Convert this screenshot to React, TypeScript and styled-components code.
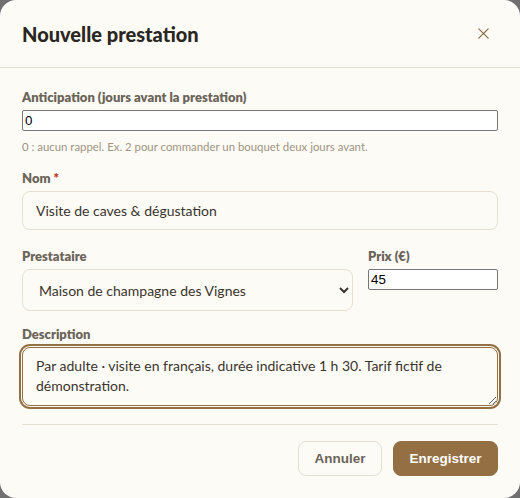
import React from "react";
import styled, { createGlobalStyle } from "styled-components";

const Global = createGlobalStyle`
  html, body { margin: 0; padding: 0; background: #707070; }
  body { width: 520px; height: 498px; overflow: hidden; }
  * { box-sizing: border-box; }
`;

const Modal = styled.div`
  width: 520px;
  height: 498px;
  background: #fdfbf6;
  border-radius: 16px;
  display: flex;
  flex-direction: column;
  overflow: hidden;
`;

const Header = styled.div`
  height: 68px;
  padding: 0 25px 0 22px;
  display: flex;
  align-items: center;
  justify-content: space-between;
  border-bottom: 1px solid #e3ddd2;
`;

const Title = styled.h2`
  margin: 0;
  font-family: Lato, "Open Sans", sans-serif;
  font-weight: 900;
  font-size: 20px;
  color: #2a2622;
`;

const Close = styled.button`
  border: none;
  background: none;
  padding: 0;
  width: 24px;
  height: 24px;
  display: flex;
  align-items: center;
  justify-content: center;
  color: #8f6b45;
  cursor: pointer;
`;

const Body = styled.div`
  padding: 21px 22px 0;
  display: flex;
  flex-direction: column;
`;

const Field = styled.div<{ $mb?: number }>`
  display: flex;
  flex-direction: column;
  margin-bottom: ${(p) => p.$mb ?? 0}px;
`;

const Label = styled.label`
  font-family: Lato, "Open Sans", sans-serif;
  font-weight: 800;
  font-size: 13px;
  color: #6b6459;
  margin-bottom: 5px;
  line-height: 16px;
`;

const Req = styled.span`
  color: #c0392b;
`;

const PlainInput = styled.input`
  font-family: Arial, "Liberation Sans", sans-serif;
  font-size: 13.33px;
  height: 21px;
  padding: 1px 2px;
  border: 1px solid #767676;
  border-radius: 2px;
  background: #fff;
  color: #000;
`;

const Help = styled.div`
  font-family: Lato, "Open Sans", sans-serif;
  font-size: 11.4px;
  color: #a09482;
  margin-top: 8px;
  line-height: 15px;
`;

const TextInput = styled.input`
  font-family: Lato, sans-serif;
  font-size: 14px;
  height: 39px;
  padding: 0 13px;
  border: 1px solid #e6dfd2;
  border-radius: 8px;
  background: #fdfbf6;
  color: #3a342d;
  outline: none;
`;

const Row = styled.div`
  display: grid;
  grid-template-columns: 1fr 130px;
  gap: 15px;
  align-items: start;
  margin-bottom: 15px;
`;

const Select = styled.select`
  font-family: Lato, sans-serif;
  font-size: 14px;
  height: 42px;
  padding: 0 10px 0 12px;
  border: 1px solid #e6dfd2;
  border-radius: 8px;
  background: #fdfbf6;
  color: #3a342d;
  outline: none;
`;

const TextArea = styled.textarea`
  font-family: Lato, sans-serif;
  font-size: 14px;
  line-height: 20px;
  height: 59px;
  padding: 8px 13px;
  border: 1px solid #946f43;
  border-radius: 8px;
  background: #fdfbf6;
  color: #3a342d;
  outline: none;
  box-shadow: 0 0 0 1px #fdfbf6, 0 0 0 3px #946f43;
  resize: vertical;
`;

const Divider = styled.div`
  height: 1px;
  background: #e3ddd2;
  margin: 18px 0 16px;
`;

const Footer = styled.div`
  display: flex;
  justify-content: flex-end;
  gap: 11px;
`;

const Button = styled.button<{ $primary?: boolean }>`
  font-family: "Liberation Sans", Arial, sans-serif;
  font-weight: 700;
  font-size: 13.5px;
  height: 35px;
  padding: 0 15.5px;
  border-radius: 8px;
  border: 1px solid ${(p) => (p.$primary ? "#946f43" : "#e3ddd2")};
  background: ${(p) => (p.$primary ? "#946f43" : "#fdfbf6")};
  color: ${(p) => (p.$primary ? "#ffffff" : "#6b6459")};
  cursor: pointer;
`;

export default function App() {
  return (
    <>
      <Global />
      <Modal>
        <Header>
          <Title>Nouvelle prestation</Title>
          <Close aria-label="Fermer">
            <svg width="11" height="11" viewBox="0 0 11 11" fill="none" stroke="currentColor" strokeWidth="1.2" strokeLinecap="round">
              <path d="M0.8 0.8 L10.2 10.2 M10.2 0.8 L0.8 10.2" />
            </svg>
          </Close>
        </Header>
        <Body>
          <Field $mb={16}>
            <Label>Anticipation (jours avant la prestation)</Label>
            <PlainInput type="number" defaultValue="0" />
            <Help>0 : aucun rappel. Ex. 2 pour commander un bouquet deux jours avant.</Help>
          </Field>
          <Field $mb={18}>
            <Label>
              Nom <Req>*</Req>
            </Label>
            <TextInput defaultValue="Visite de caves & dégustation" />
          </Field>
          <Row>
            <Field>
              <Label>Prestataire</Label>
              <Select defaultValue="v">
                <option value="v">Maison de champagne des Vignes</option>
              </Select>
            </Field>
            <Field>
              <Label>Prix (€)</Label>
              <PlainInput type="text" defaultValue="45" />
            </Field>
          </Row>
          <Field>
            <Label>Description</Label>
            <TextArea defaultValue="Par adulte · visite en français, durée indicative 1 h 30. Tarif fictif de démonstration." />
          </Field>
          <Divider />
          <Footer>
            <Button>Annuler</Button>
            <Button $primary>Enregistrer</Button>
          </Footer>
        </Body>
      </Modal>
    </>
  );
}
